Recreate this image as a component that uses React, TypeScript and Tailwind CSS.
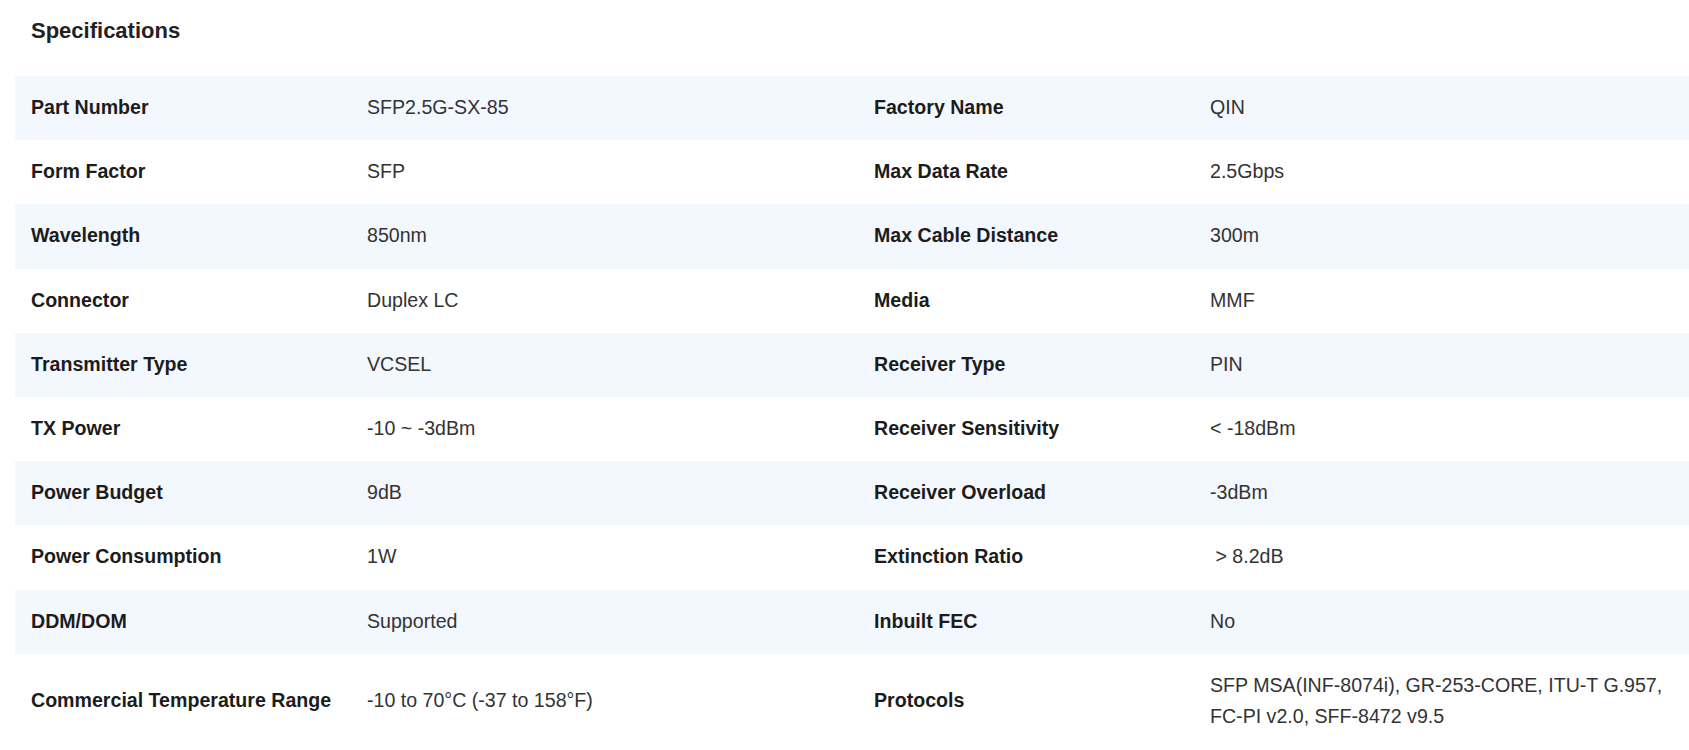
import React from 'react';

type Spec = [string, string, string, string];

const specs: Spec[] = [
  ['Part Number', 'SFP2.5G-SX-85', 'Factory Name', 'QIN'],
  ['Form Factor', 'SFP', 'Max Data Rate', '2.5Gbps'],
  ['Wavelength', '850nm', 'Max Cable Distance', '300m'],
  ['Connector', 'Duplex LC', 'Media', 'MMF'],
  ['Transmitter Type', 'VCSEL', 'Receiver Type', 'PIN'],
  ['TX Power', '-10 ~ -3dBm', 'Receiver Sensitivity', '< -18dBm'],
  ['Power Budget', '9dB', 'Receiver Overload', '-3dBm'],
  ['Power Consumption', '1W', 'Extinction Ratio', '\u00a0> 8.2dB'],
  ['DDM/DOM', 'Supported', 'Inbuilt FEC', 'No'],
  [
    'Commercial Temperature Range',
    '-10 to 70°C (-37 to 158°F)',
    'Protocols',
    'SFP MSA(INF-8074i), GR-253-CORE, ITU-T G.957, FC-PI v2.0, SFF-8472 v9.5',
  ],
];

const App: React.FC = () => {
  return (
    <div className="min-h-screen w-full overflow-hidden bg-white pt-[14px] font-['Liberation_Sans',Arial,sans-serif]">
      <h2 className="pl-[31px] text-[22px] leading-[33px] font-bold text-[#222]">Specifications</h2>

      <div className="mt-[29px] ml-[15px] text-[19.6px] leading-[31.2px]">
        {specs.map((row, i) => (
          <div
            key={row[0]}
            className={`grid grid-cols-[336px_507px_336px_1fr] ${i % 2 === 0 ? 'bg-[#f3f7fe]' : 'bg-white'}`}
          >
            <div className="flex items-center px-4 pt-[16px] pb-[17px] font-bold text-[#1c1c1c]">{row[0]}</div>
            <div className="flex items-center px-4 pt-[16px] pb-[17px] text-[#333]">{row[1]}</div>
            <div className="flex items-center px-4 pt-[16px] pb-[17px] font-bold text-[#1c1c1c]">{row[2]}</div>
            <div className="flex items-center px-4 pt-[16px] pb-[17px] text-[#333]">{row[3]}</div>
          </div>
        ))}
      </div>
    </div>
  );
};

export default App;
